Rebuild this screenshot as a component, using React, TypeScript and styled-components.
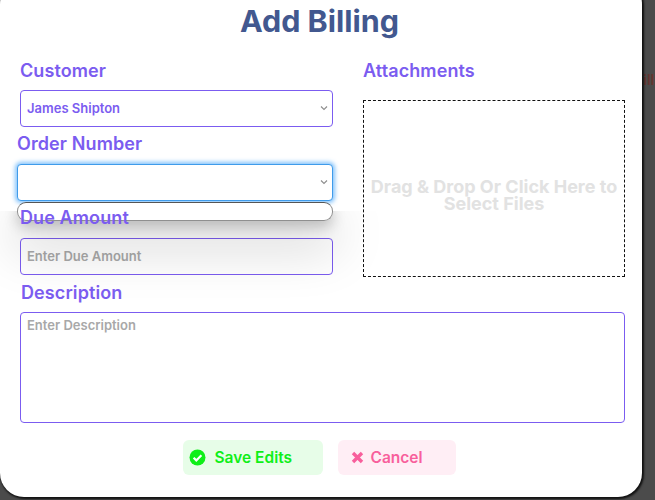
import React from 'react';
import styled, { createGlobalStyle } from 'styled-components';

const purple = '#7b5cf0';

const GlobalStyle = createGlobalStyle`
  html, body {
    margin: 0;
    height: 500px;
    overflow: hidden;
    background: #4b4b4b;
    font-family: Inter, "Open Sans", sans-serif;
  }
`;

const BackdropText = styled.span`
  position: absolute;
  top: 72px;
  left: 634px;
  font-size: 14px;
  line-height: 16px;
  font-weight: 600;
  color: #65352f;
`;

const Modal = styled.div`
  box-sizing: border-box;
  position: relative;
  z-index: 1;
  width: 642px;
  height: 517px;
  margin-top: -20px;
  padding: 21px 17px 0 20px;
  background: #fff;
  border-radius: 24px;
  box-shadow: 1px 1px 2px 1px #111;
  overflow: hidden;
`;

const Title = styled.h1`
  margin: 0 0 18px;
  padding-right: 6px;
  font-size: 30.5px;
  line-height: 40px;
  font-weight: 700;
  text-align: center;
  color: #42588f;
`;

const Columns = styled.div`
  display: grid;
  grid-template-columns: 313px 262px;
  column-gap: 30px;
`;

const Column = styled.div`
  display: flex;
  flex-direction: column;
`;

const Label = styled.label<{ $left?: number; $top?: number; $bottom?: number }>`
  display: block;
  position: relative;
  z-index: 3;
  margin: ${(p) => p.$top ?? 0}px 0 ${(p) => p.$bottom ?? 0}px ${(p) => p.$left ?? 0}px;
  font-size: 18px;
  line-height: 22px;
  font-weight: 600;
  letter-spacing: 0.1px;
  color: ${purple};
`;

const FieldBox = styled.div<{ $focused?: boolean }>`
  box-sizing: border-box;
  display: flex;
  align-items: center;
  justify-content: space-between;
  height: 37px;
  margin-top: 9px;
  padding: 0 4px 2px 6px;
  background: #fff;
  border: 1px solid ${(p) => (p.$focused ? '#3f9bea' : purple)};
  border-radius: 4px;
  box-shadow: ${(p) => (p.$focused ? '0 0 4px 2px rgba(80, 170, 250, 0.7)' : 'none')};
  font-size: 13px;
  font-weight: 600;
  color: ${purple};
`;

const Placeholder = styled.span`
  font-size: 13px;
  font-weight: 600;
  color: #a8a8a8;
`;

const OrderGroup = styled.div`
  position: relative;
  margin: 6px 0 0 -3px;
`;

const ShadowClip = styled.div`
  position: absolute;
  z-index: 2;
  top: 231px;
  left: 0;
  width: 420px;
  height: 110px;
  overflow: hidden;
  pointer-events: none;
`;

const DropShadow = styled.div`
  position: absolute;
  top: -10px;
  left: 17px;
  width: 316px;
  height: 20px;
  border-radius: 9px;
  box-shadow: 0 6px 14px rgba(0, 0, 0, 0.22), 0 22px 50px 8px rgba(0, 0, 0, 0.15);
`;

const Dropdown = styled.div`
  box-sizing: border-box;
  position: absolute;
  z-index: 2;
  top: 222px;
  left: 17px;
  width: 316px;
  height: 19px;
  background: #fff;
  border: 1.5px solid #8f8f8f;
  border-top-color: #555;
  border-radius: 9px;
`;

const DropZone = styled.div`
  box-sizing: border-box;
  display: flex;
  align-items: center;
  justify-content: center;
  height: 177px;
  margin-top: 19px;
  padding: 12px 4px 0;
  border: 1px dashed #111;
  text-align: center;
  font-size: 18px;
  line-height: 17px;
  font-weight: 700;
  color: #e2e2e2;
`;

const TextArea = styled.div`
  box-sizing: border-box;
  width: 605px;
  height: 111px;
  padding: 1px 6px;
  border: 1px solid ${purple};
  border-radius: 4px;
`;

const Actions = styled.div`
  display: flex;
  justify-content: center;
  gap: 15px;
  margin-top: 17px;
  padding-right: 7px;
`;

const ActionButton = styled.button<{
  $bg: string;
  $fg: string;
  $width: number;
  $gap: number;
  $pad: number;
}>`
  display: flex;
  align-items: center;
  gap: ${(p) => p.$gap}px;
  box-sizing: border-box;
  width: ${(p) => p.$width}px;
  height: 35px;
  padding: 0 0 0 ${(p) => p.$pad}px;
  border: 0;
  border-radius: 6px;
  background: ${(p) => p.$bg};
  color: ${(p) => p.$fg};
  font-family: inherit;
  font-size: 15.5px;
  font-weight: 600;
`;

const Chevron = () => (
  <svg width="8" height="6" viewBox="0 0 8 6" fill="none" stroke="#8d8d8d" strokeWidth="1.1">
    <path d="M1 1.5 4 4.5 7 1.5" />
  </svg>
);

const CheckIcon = () => (
  <svg width="17" height="17" viewBox="0 0 17 17">
    <circle cx="8.5" cy="8.5" r="8" fill="#0fef18" />
    <path d="M4.6 8.8 7.3 11.4 12.4 6.2" fill="none" stroke="#fff" strokeWidth="2.2" />
  </svg>
);

const CrossIcon = () => (
  <svg width="13" height="13" viewBox="0 0 13 13">
    <path d="M2 2 11 11M11 2 2 11" fill="none" stroke="#f85f9c" strokeWidth="3.4" />
  </svg>
);

export default function App() {
  return (
    <>
      <GlobalStyle />
      <BackdropText>Bill</BackdropText>
      <Modal>
        <Title>Add Billing</Title>
        <Columns>
          <Column>
            <Label $top={1} $bottom={-1}>Customer</Label>
            <FieldBox>
              James Shipton
              <Chevron />
            </FieldBox>
            <OrderGroup>
              <Label>Order Number</Label>
              <FieldBox $focused>
                <span />
                <Chevron />
              </FieldBox>
            </OrderGroup>
            <Label $top={6}>Due Amount</Label>
            <FieldBox>
              <Placeholder>Enter Due Amount</Placeholder>
            </FieldBox>
          </Column>
          <Column>
            <Label $top={1} $bottom={-1}>Attachments</Label>
            <DropZone>
              <span>
                Drag &amp; Drop Or Click Here to
                <br />
                Select Files
              </span>
            </DropZone>
          </Column>
        </Columns>
        <Label $left={1} $top={5} $bottom={8}>
          Description
        </Label>
        <TextArea>
          <Placeholder>Enter Description</Placeholder>
        </TextArea>
        <Actions>
          <ActionButton $bg="#e7fde8" $fg="#0fef18" $width={140} $gap={9} $pad={6}>
            <CheckIcon />
            Save Edits
          </ActionButton>
          <ActionButton $bg="#ffeef5" $fg="#f85f9c" $width={118} $gap={7} $pad={13}>
            <CrossIcon />
            Cancel
          </ActionButton>
        </Actions>
        <ShadowClip>
          <DropShadow />
        </ShadowClip>
        <Dropdown />
      </Modal>
    </>
  );
}
